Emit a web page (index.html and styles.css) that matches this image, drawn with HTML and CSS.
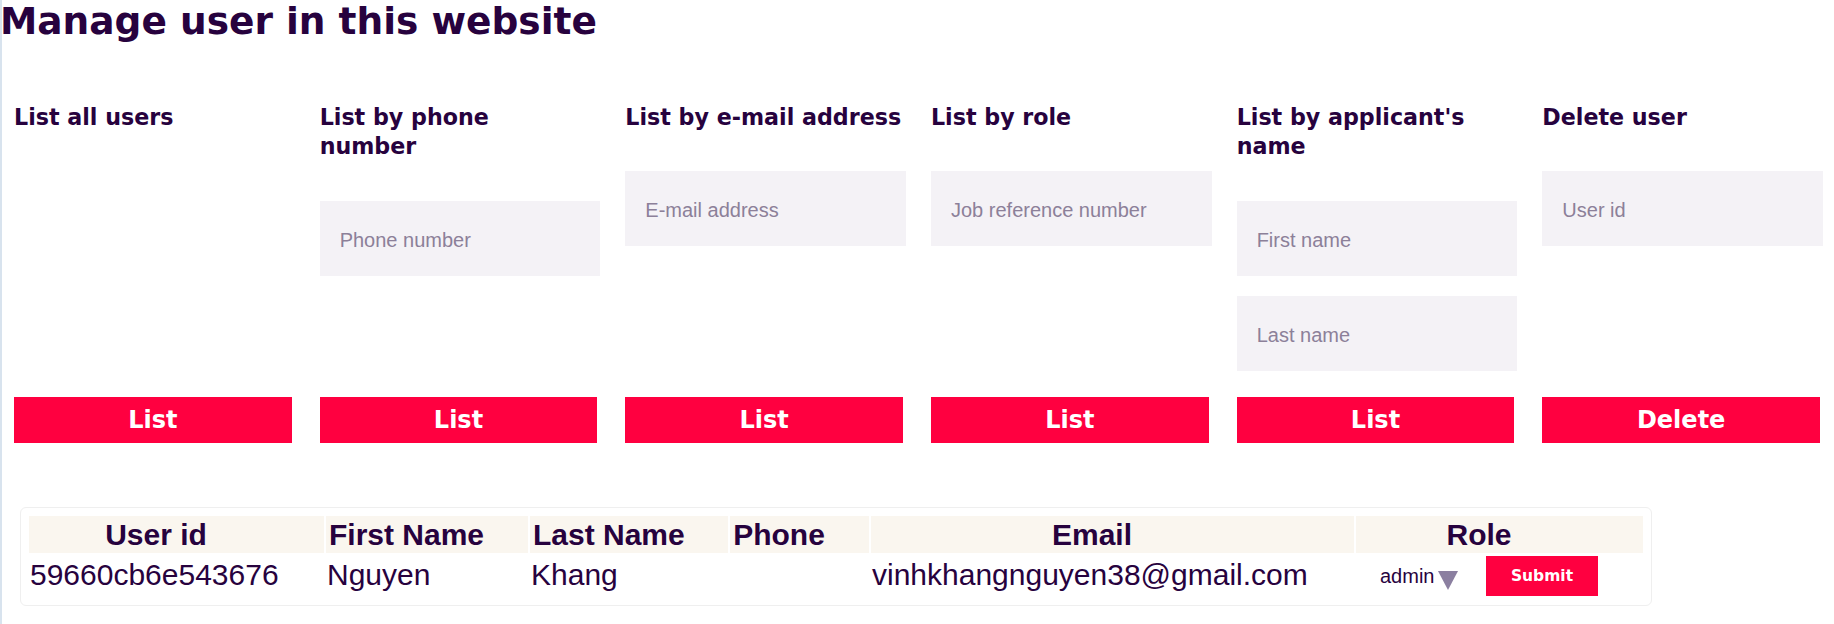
FILE: index.html
```html
<!DOCTYPE html>
<html lang="en">
<head>
<meta charset="utf-8">
<title>Manage users</title>
<link rel="stylesheet" href="styles.css">
</head>
<body>
<main class="page">
  <h1 class="title">Manage user in this website</h1>
  <section class="actions">
    <form class="action">
      <h3 class="action-title">List all users</h3>
      <div class="fields"></div>
      <button type="button" class="btn">List</button>
    </form>
    <form class="action">
      <h3 class="action-title action-title--narrow">List by phone number</h3>
      <div class="fields">
        <input class="field" type="text" placeholder="Phone number">
      </div>
      <button type="button" class="btn">List</button>
    </form>
    <form class="action">
      <h3 class="action-title">List by e-mail address</h3>
      <div class="fields">
        <input class="field" type="text" placeholder="E-mail address">
      </div>
      <button type="button" class="btn">List</button>
    </form>
    <form class="action">
      <h3 class="action-title">List by role</h3>
      <div class="fields">
        <input class="field" type="text" placeholder="Job reference number">
      </div>
      <button type="button" class="btn">List</button>
    </form>
    <form class="action">
      <h3 class="action-title">List by applicant's name</h3>
      <div class="fields">
        <input class="field" type="text" placeholder="First name">
        <input class="field" type="text" placeholder="Last name">
      </div>
      <button type="button" class="btn">List</button>
    </form>
    <form class="action">
      <h3 class="action-title">Delete user</h3>
      <div class="fields">
        <input class="field" type="text" placeholder="User id">
      </div>
      <button type="button" class="btn">Delete</button>
    </form>
  </section>
  <div class="table-wrap">
    <table class="users">
      <colgroup>
        <col class="c-id"><col class="c-first"><col class="c-last"><col class="c-phone"><col class="c-email"><col class="c-role">
      </colgroup>
      <thead>
        <tr><th>User id</th><th>First Name</th><th>Last Name</th><th>Phone</th><th>Email</th><th>Role</th></tr>
      </thead>
      <tbody>
        <tr>
          <td>59660cb6e543676</td>
          <td>Nguyen</td>
          <td>Khang</td>
          <td></td>
          <td>vinhkhangnguyen38@gmail.com</td>
          <td class="role-cell">
            <div class="role-form">
              <select class="role-select"><option>admin</option><option>user</option></select>
              <svg class="role-arrow" width="20" height="19" viewBox="0 0 20 19"><path d="M0 0H20L10 19Z" fill="#8b7fa0"/></svg>
              <button type="button" class="btn-submit">Submit</button>
            </div>
          </td>
        </tr>
      </tbody>
    </table>
  </div>
</main>
</body>
</html>
```
FILE: styles.css
```css
* { box-sizing: border-box; }

html, body {
  margin: 0;
  padding: 0;
}

body {
  background: #ffffff;
  color: #27023e;
  font-family: "Liberation Sans", Arial, sans-serif;
  box-shadow: inset 2px 0 0 #d8e3ee;
  min-height: 100vh;
}

.page {
  width: 1834px;
}

.title {
  margin: 0;
  font-family: "DejaVu Sans", "Inter", sans-serif;
  font-weight: 700;
  font-size: 37.5px;
  line-height: 42px;
  color: #27023e;
}

.actions {
  display: grid;
  grid-template-columns: repeat(6, 1fr);
  margin-top: 61px;
}

.action {
  display: flex;
  flex-direction: column;
  padding: 0 14px;
  margin: 0;
}

.action-title {
  margin: 0 0 39px 0;
  font-family: "DejaVu Sans", "Inter", sans-serif;
  font-weight: 700;
  font-size: 22.2px;
  line-height: 29.3px;
  color: #27023e;
}

.action-title--narrow {
  max-width: 240px;
}

.fields {
  display: flex;
  flex-direction: column;
  gap: 20px;
  margin-bottom: 26px;
}

.field {
  width: calc(100% + 3px);
  height: 75px;
  border: 0;
  background: #f4f2f6;
  padding: 4px 20px 0 20px;
  font-family: "Liberation Sans", Arial, sans-serif;
  font-size: 20px;
  color: #27023e;
  outline: none;
}

.field::placeholder {
  color: #8c8099;
}

.btn {
  margin-top: auto;
  width: 100%;
  height: 46px;
  border: 0;
  background: #ff0040;
  color: #ffffff;
  font-family: "DejaVu Sans", "Inter", sans-serif;
  font-weight: 700;
  font-size: 24px;
  padding: 0;
  cursor: pointer;
}

.table-wrap {
  margin: 64px 0 0 20px;
  width: 1632px;
  border: 1px solid #efefef;
  border-radius: 6px;
  padding: 6px;
}

.users {
  width: 1618px;
  table-layout: fixed;
  border-collapse: separate;
  border-spacing: 2px;
  font-family: "Liberation Sans", Arial, sans-serif;
  font-size: 30px;
  color: #27023e;
}

.c-id { width: 295px; }
.c-first { width: 202px; }
.c-last { width: 198px; }
.c-phone { width: 139px; }
.c-email { width: 483px; }
.c-role { width: 287px; }

.users th {
  background: #faf6ef;
  font-weight: 700;
  line-height: 33px;
  padding: 2px 44px 2px 3px;
  text-align: center;
  white-space: nowrap;
}

.users td {
  padding: 1px 1px 3px 1px;
  text-align: left;
  vertical-align: middle;
  white-space: nowrap;
}

.users td.role-cell {
  padding: 1px 0 1px 24px;
}

.role-form {
  display: flex;
  align-items: center;
}

.role-select {
  appearance: none;
  -webkit-appearance: none;
  border: 0;
  background: transparent;
  padding: 0;
  margin: 0;
  font-family: "Liberation Sans", Arial, sans-serif;
  font-size: 20px;
  color: #27023e;
  width: 54px;
}

.role-arrow {
  margin: 10px 0 0 4px;
  flex: none;
}

.btn-submit {
  margin-left: 28px;
  width: 112px;
  height: 40px;
  border: 0;
  background: #ff0040;
  color: #ffffff;
  font-family: "DejaVu Sans", "Inter", sans-serif;
  font-weight: 700;
  font-size: 15.5px;
  padding: 0;
}
```
